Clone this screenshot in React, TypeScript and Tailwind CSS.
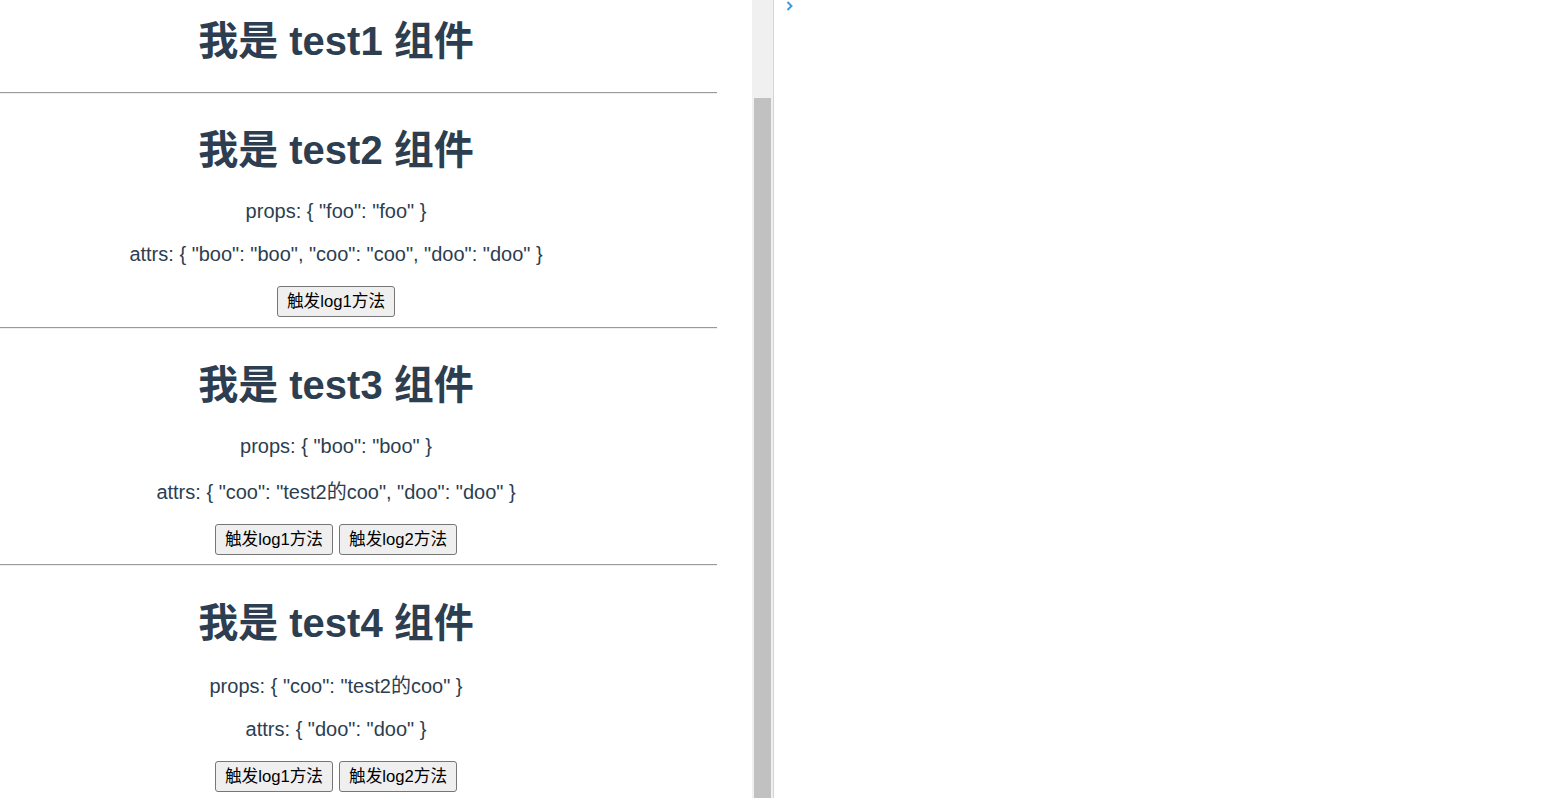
import React from 'react';

const textFont = { fontFamily: '"Liberation Sans", "Noto Sans CJK SC", sans-serif' };

function Rule() {
  return <div className="w-[717px] h-[2px] border-t border-t-[#9a9a9a] border-b border-b-[#eeeeee]" />;
}

function Heading({ name, mt, mb = '' }: { name: string; mt: string; mb?: string }) {
  return (
    <h1 className={`${mt} ${mb} w-[672px] text-center text-[40px] leading-[48px] font-bold text-[#2c3e50]`}>
      我是 {name} 组件
    </h1>
  );
}

function Line({ children, mt }: { children: React.ReactNode; mt: string }) {
  return (
    <p className={`${mt} w-[672px] text-center text-[20px] leading-[24px] text-[#2c3e50]`}>{children}</p>
  );
}

function LogButton({ label }: { label: string }) {
  return (
    <button className="h-[31px] px-[9px] bg-[#efefef] border border-[#767676] rounded-[3px] text-[16.67px] leading-[20px] text-black">
      {label}
    </button>
  );
}

function Buttons({ labels, mt }: { labels: string[]; mt: string }) {
  return (
    <div className={`${mt} w-[672px] flex justify-center gap-[6px]`}>
      {labels.map((l) => (
        <LogButton key={l} label={l} />
      ))}
    </div>
  );
}

export default function App() {
  return (
    <div className="flex h-[798px] w-full overflow-hidden bg-white" style={textFont}>
      <div className="w-[752px] shrink-0 overflow-hidden flex flex-col">
        <Heading name="test1" mt="mt-[17px]" mb="mb-[27px]" />
        <Rule />

        <Heading name="test2" mt="mt-[32px]" />
        <Line mt="mt-[25px]">props: {'{'} "foo": "foo" {'}'}</Line>
        <Line mt="mt-[19px]">attrs: {'{'} "boo": "boo", "coo": "coo", "doo": "doo" {'}'}</Line>
        <Buttons labels={['触发log1方法']} mt="mt-[20px]" />
        <div className="mt-[10px]">
          <Rule />
        </div>

        <Heading name="test3" mt="mt-[32px]" />
        <Line mt="mt-[25px]">props: {'{'} "boo": "boo" {'}'}</Line>
        <Line mt="mt-[22px]">attrs: {'{'} "coo": "test2的coo", "doo": "doo" {'}'}</Line>
        <Buttons labels={['触发log1方法', '触发log2方法']} mt="mt-[20px]" />
        <div className="mt-[9px]">
          <Rule />
        </div>

        <Heading name="test4" mt="mt-[33px]" />
        <Line mt="mt-[27px]">props: {'{'} "coo": "test2的coo" {'}'}</Line>
        <Line mt="mt-[19px]">attrs: {'{'} "doo": "doo" {'}'}</Line>
        <Buttons labels={['触发log1方法', '触发log2方法']} mt="mt-[20px]" />
      </div>

      {/* preview scrollbar */}
      <div className="w-[21px] shrink-0 bg-[#f0f0f0] pt-[98px] pl-[2px] pr-[2px]">
        <div className="h-full bg-[#c1c1c1]" />
      </div>
      <div className="w-px shrink-0 bg-[#d4d4d4]" />

      <div className="flex-1 pl-[12px] pt-[1px]">
        <svg width="8" height="10" viewBox="0 0 8 10">
          <polyline points="1.5,1 5.5,5 1.5,9" fill="none" stroke="#3d9be0" strokeWidth="2" />
        </svg>
      </div>
    </div>
  );
}
